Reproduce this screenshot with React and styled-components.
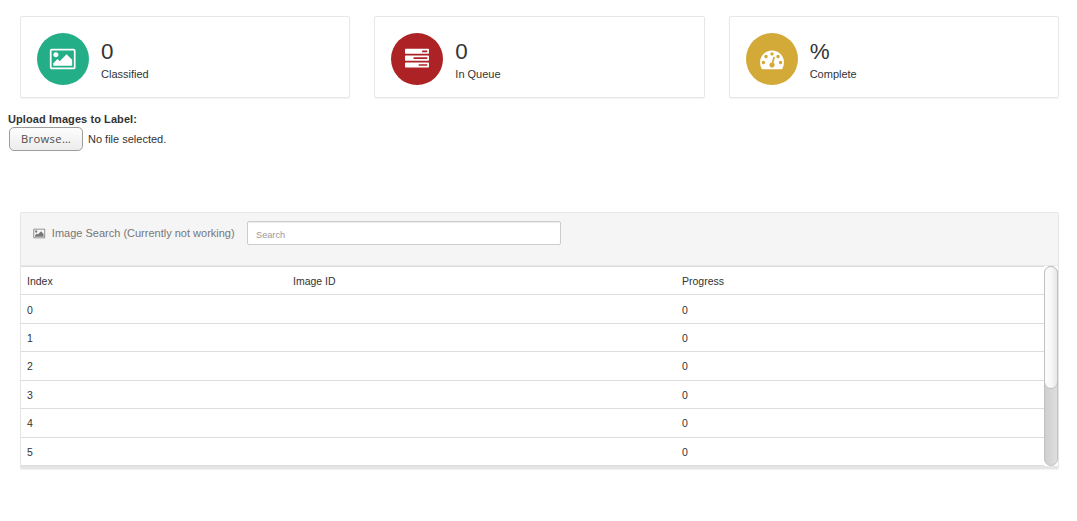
import React from "react";
import styled, { createGlobalStyle } from "styled-components";

const GlobalStyle = createGlobalStyle`
  * { box-sizing: border-box; }
  body {
    margin: 0;
    background: #fff;
    color: #333;
    font-family: "Liberation Sans", Arial, sans-serif;
    font-size: 11px;
    line-height: 16px;
  }
`;

const Page = styled.main`
  padding-top: 16px;
  height: 521px;
  overflow: hidden;
`;

const Stats = styled.section`
  display: grid;
  grid-template-columns: repeat(3, 1fr);
  gap: 24px;
  margin: 0 18px 0 20px;
`;

const Card = styled.div`
  display: flex;
  gap: 12px;
  height: 82px;
  padding: 16px;
  border: 1px solid #e7e7e7;
  border-radius: 2px;
  box-shadow: 0 1px 1px rgba(0, 0, 0, 0.05);
`;

const Disc = styled.div`
  display: flex;
  align-items: center;
  justify-content: center;
  width: 52px;
  height: 52px;
  border-radius: 50%;
  color: #fff;
  background: ${(p) => p.$color};
`;

const Icon = styled.svg`
  display: block;
  flex: none;
  width: ${(p) => (p.$size * p.$ratio) + "px"};
  height: ${(p) => p.$size}px;
  fill: currentColor;
`;

const StatText = styled.div`
  padding-top: 5px;
`;

const Value = styled.div`
  font-size: 22.4px;
  line-height: 28px;
`;

const Caption = styled.div`
  line-height: 16px;
`;

const Upload = styled.form`
  padding: 13px 0 0 8px;
`;

const UploadLabel = styled.label`
  display: block;
  font-weight: bold;
  letter-spacing: 0.08px;
`;

const FileRow = styled.div`
  display: flex;
  align-items: center;
  gap: 5px;
  padding-left: 1px;
`;

const BrowseButton = styled.button`
  width: 74px;
  height: 24px;
  padding: 0;
  border: 1px solid #9d9d9b;
  border-radius: 5px;
  background: linear-gradient(#fdfdfd, #ececec);
  color: #4c4c4c;
  font: 11.2px/20px "Open Sans", "Noto Sans", sans-serif;
  letter-spacing: 0.35px;
`;

const Panel = styled.section`
  margin: 61px 18px 0 20px;
  height: 257px;
  border: 1px solid #e5e5e5;
  border-bottom: 3px solid #e5e5e5;
  border-radius: 2px;
  box-shadow: 0 1px 1px rgba(0, 0, 0, 0.05);
`;

const PanelHeader = styled.header`
  display: flex;
  align-items: flex-start;
  height: 53px;
  padding: 8px 12px;
  border-bottom: 1px solid #e7e7e7;
  background: #f5f5f5;
  color: #777;
`;

const PanelTitle = styled.div`
  display: flex;
  align-items: center;
  width: 214px;
  height: 24px;
  gap: 6.3px;
  white-space: nowrap;
`;

const SearchInput = styled.input`
  width: 314px;
  height: 24px;
  padding: 3px 8px 0;
  border: 1px solid #ccc;
  border-radius: 2px;
  box-shadow: inset 0 1px 1px rgba(0, 0, 0, 0.075);
  font: 9.2px "Liberation Sans", Arial, sans-serif;
  &::placeholder { color: #999; }
`;

const Scroller = styled.div`
  display: flex;
  height: 200px;
`;

const Table = styled.div`
  flex: 1;
  height: 200px;
  overflow: hidden;
  border-bottom: 1px solid #ddd;
`;

const Row = styled.div`
  display: grid;
  grid-template-columns: 266px 389px 1fr;
  height: 28.43px;
  padding: 7.1px 6px 0;
  border-top: 1px solid #ddd;
  font-size: 10.5px;
  line-height: 15px;
`;

const Track = styled.div`
  width: 14px;
  height: 200px;
  border: 1px solid #c1c1bf;
  border-radius: 7px;
  background: linear-gradient(90deg, #cfcfcf, #dedede);
`;

const Thumb = styled.div`
  width: 14px;
  height: 123px;
  margin: -1px;
  border: 1px solid #c1c1bf;
  border-radius: 7px;
  background: linear-gradient(90deg, #fcfcfc, #f7f7f7 50%, #e7e7e7);
`;

const PICTURE =
  "M704 576q0 80-56 136t-136 56-136-56-56-136 56-136 136-56 136 56 56 136zm1024 384v448h-1408v-192l320-320 160 160 512-512zm96-704h-1600q-13 0-22.5 9.5t-9.5 22.5v1216q0 13 9.5 22.5t22.5 9.5h1600q13 0 22.5-9.5t9.5-22.5v-1216q0-13-9.5-22.5t-22.5-9.5zm160 32v1216q0 66-47 113t-113 47h-1600q-66 0-113-47t-47-113v-1216q0-66 47-113t113-47h1600q66 0 113 47t47 113z";
const TASKS =
  "M1024 1408h640v-128h-640v128zm-384-512h1024v-128h-1024v128zm640-512h384v-128h-384v128zm512 832v256q0 26-19 45t-45 19h-1664q-26 0-45-19t-19-45v-256q0-26 19-45t45-19h1664q26 0 45 19t19 45zm0-512v256q0 26-19 45t-45 19h-1664q-26 0-45-19t-19-45v-256q0-26 19-45t45-19h1664q26 0 45 19t19 45zm0-512v256q0 26-19 45t-45 19h-1664q-26 0-45-19t-19-45v-256q0-26 19-45t45-19h1664q26 0 45 19t19 45z";
const GAUGE =
  "M384 1152q0-53-37.5-90.5t-90.5-37.5-90.5 37.5-37.5 90.5 37.5 90.5 90.5 37.5 90.5-37.5 37.5-90.5zm192-448q0-53-37.5-90.5t-90.5-37.5-90.5 37.5-37.5 90.5 37.5 90.5 90.5 37.5 90.5-37.5 37.5-90.5zm428 481l101-382q6-26-7.5-48.5t-38.5-29.5-48 6.5-30 39.5l-101 382q-60 5-107 43.5t-63 98.5q-20 77 20 146t117 89 146-20 89-117q16-60-6-117t-72-91zm660-33q0-53-37.5-90.5t-90.5-37.5-90.5 37.5-37.5 90.5 37.5 90.5 90.5 37.5 90.5-37.5 37.5-90.5zm-640-640q0-53-37.5-90.5t-90.5-37.5-90.5 37.5-37.5 90.5 37.5 90.5 90.5 37.5 90.5-37.5 37.5-90.5zm448 192q0-53-37.5-90.5t-90.5-37.5-90.5 37.5-37.5 90.5 37.5 90.5 90.5 37.5 90.5-37.5 37.5-90.5zm320 448q0 261-141 483-19 29-54 29h-1402q-35 0-54-29-141-221-141-483 0-182 71-348t191-286 286-191 348-71 348 71 286 191 191 286 71 348z";

function Glyph({ path, size = 24, box = 1792 }) {
  return (
    <Icon $size={size} $ratio={box / 1792} viewBox={`0 0 ${box} 1792`} aria-hidden="true">
      <path fillRule="evenodd" d={path} />
    </Icon>
  );
}

const stats = [
  { value: "0", caption: "Classified", color: "#24ae88", path: PICTURE, box: 2048 },
  { value: "0", caption: "In Queue", color: "#ad2325", path: TASKS },
  { value: "%", caption: "Complete", color: "#d3a937", path: GAUGE },
];

const rows = [0, 1, 2, 3, 4, 5];

export default function App() {
  return (
    <Page>
      <GlobalStyle />
      <Stats>
        {stats.map((s) => (
          <Card key={s.caption}>
            <Disc $color={s.color}>
              <Glyph path={s.path} box={s.box} />
            </Disc>
            <StatText>
              <Value>{s.value}</Value>
              <Caption>{s.caption}</Caption>
            </StatText>
          </Card>
        ))}
      </Stats>
      <Upload>
        <UploadLabel>Upload Images to Label:</UploadLabel>
        <FileRow>
          <BrowseButton type="button">Browse…</BrowseButton>
          <span>No file selected.</span>
        </FileRow>
      </Upload>
      <Panel>
        <PanelHeader>
          <PanelTitle>
            <Glyph path={PICTURE} box={2048} size={11} />
            Image Search (Currently not working)
          </PanelTitle>
          <SearchInput placeholder="Search" />
        </PanelHeader>
        <Scroller>
          <Table>
            <Row>
              <span>Index</span>
              <span>Image ID</span>
              <span>Progress</span>
            </Row>
            {rows.map((n) => (
              <Row key={n}>
                <span>{n}</span>
                <span />
                <span>0</span>
              </Row>
            ))}
          </Table>
          <Track>
            <Thumb />
          </Track>
        </Scroller>
      </Panel>
    </Page>
  );
}
